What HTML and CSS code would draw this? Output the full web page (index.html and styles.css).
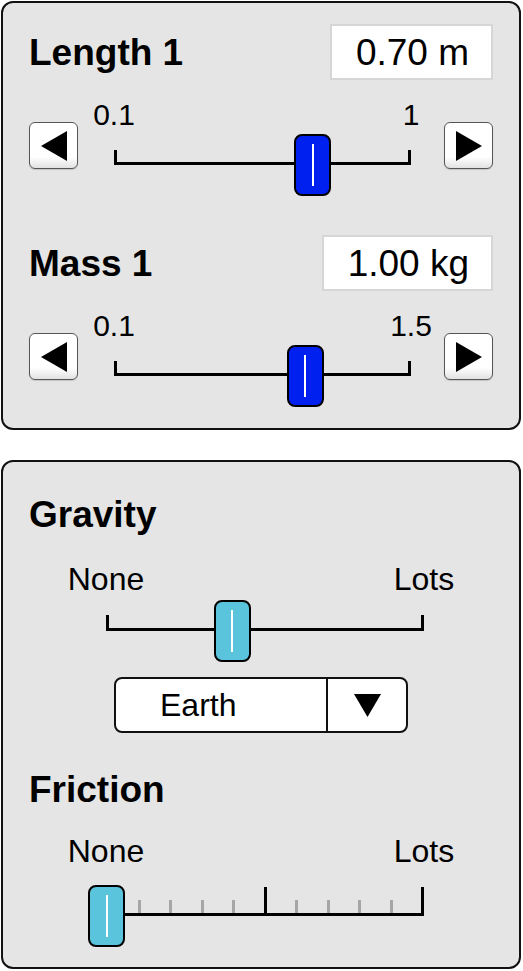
FILE: index.html
```html
<!DOCTYPE html>
<html>
<head>
<meta charset="utf-8">
<title>Pendulum controls</title>
<link rel="stylesheet" href="styles.css">
</head>
<body>
<div class="page">

	<!-- pendulum 1 settings -->
	<div class="panel panel-pendulum">
		<div class="control">
			<div class="control-head">
				<span class="title">Length 1</span>
				<span class="readout">0.70 m</span>
			</div>
			<div class="slider-row">
				<button class="arrow"><svg width="26" height="30" viewBox="0 0 26 30"><polygon points="26,0 26,30 0,15"/></svg></button>
				<div class="slider">
					<div class="ends"><span>0.1</span><span>1</span></div>
					<div class="rail">
						<div class="track"><i class="tick"></i><i class="tick"></i></div>
						<div class="thumb" style="left: 66.7%"></div>
					</div>
				</div>
				<button class="arrow"><svg width="26" height="30" viewBox="0 0 26 30"><polygon points="0,0 0,30 26,15"/></svg></button>
			</div>
		</div>

		<div class="control control-next">
			<div class="control-head">
				<span class="title">Mass 1</span>
				<span class="readout">1.00 kg</span>
			</div>
			<div class="slider-row">
				<button class="arrow"><svg width="26" height="30" viewBox="0 0 26 30"><polygon points="26,0 26,30 0,15"/></svg></button>
				<div class="slider">
					<div class="ends"><span>0.1</span><span>1.5</span></div>
					<div class="rail">
						<div class="track"><i class="tick"></i><i class="tick"></i></div>
						<div class="thumb" style="left: 64.3%"></div>
					</div>
				</div>
				<button class="arrow"><svg width="26" height="30" viewBox="0 0 26 30"><polygon points="0,0 0,30 26,15"/></svg></button>
			</div>
		</div>
	</div>

	<!-- world settings -->
	<div class="panel panel-world">
		<div class="title">Gravity</div>
		<div class="slider slider-wide">
			<div class="ends"><span>None</span><span>Lots</span></div>
			<div class="rail rail-gravity">
				<div class="track"><i class="tick"></i><i class="tick"></i></div>
				<div class="thumb thumb-light" style="left: 39.5%"></div>
			</div>
		</div>
		<div class="combo">
			<span class="combo-value">Earth</span>
			<span class="combo-button"><svg width="27" height="23" viewBox="0 0 27 23"><polygon points="0,0 27,0 13.5,23"/></svg></span>
		</div>

		<div class="title title-next">Friction</div>
		<div class="slider slider-wide slider-friction">
			<div class="ends"><span>None</span><span>Lots</span></div>
			<div class="rail rail-friction">
				<div class="track track-tall">
					<i class="tick"></i>
					<i class="tick minor"></i><i class="tick minor"></i><i class="tick minor"></i><i class="tick minor"></i>
					<i class="tick"></i>
					<i class="tick minor"></i><i class="tick minor"></i><i class="tick minor"></i><i class="tick minor"></i>
					<i class="tick"></i>
				</div>
				<div class="thumb thumb-light" style="left: 0%"></div>
			</div>
		</div>
	</div>

</div>
</body>
</html>
```

FILE: styles.css
```css
* {
	-webkit-box-sizing: border-box;
	box-sizing: border-box;
}

body {
	margin: 0;
	background: #fff;
	font-family: "Liberation Sans", Arial, Helvetica, sans-serif;
	color: #000;
}

.page {
	display: flex;
	flex-direction: column;
	gap: 30px;
	padding: 1px 2px 2px 1px;
	width: 523px;
}

.panel {
	width: 520px;
	background: #e5e5e5;
	border: 2px solid #111;
	border-radius: 12px;
}

.panel-pendulum {
	padding: 21px 26px 21px 26px;
}

.panel-world {
	padding: 32px 26px 20px 26px;
}

.title {
	font-size: 37px;
	font-weight: bold;
	line-height: 42px;
}

.title-next {
	margin-top: 36px;
}

/* header: name on the left, value box on the right */
.control-head {
	display: flex;
	justify-content: space-between;
	align-items: baseline;
}

.control-next {
	margin-top: 39px;
}

.readout {
	height: 56px;
	padding: 2px 22px 0 24px;
	background: #fff;
	border: 2px solid #d6d6d6;
	font-size: 37px;
	line-height: 50px;
}

.slider-row {
	display: flex;
	align-items: flex-start;
	margin-top: 20px;
}

.arrow {
	width: 49px;
	height: 47px;
	margin-top: 22px;
	padding: 0;
	display: flex;
	align-items: center;
	justify-content: center;
	background: linear-gradient(#fff 75%, #e2e2e2);
	border: 1px solid #555;
	border-radius: 6px;
	box-shadow: 0 1px 1px rgba(0,0,0,.15);
}

.arrow svg {
	fill: #000;
}

.slider {
	flex: 1;
	padding: 0 33px 0 36px;
}

.slider-wide {
	flex: none;
	width: 318px;
	padding: 0;
	margin: 27px 0 0 77px;
}

.slider-friction {
	margin-top: 24px;
}

/* min / max labels, each centred over its end of the track */
.ends {
	display: flex;
	justify-content: space-between;
	font-size: 30px;
	line-height: 30px;
}

.ends span {
	width: 0;
	display: flex;
	justify-content: center;
	white-space: nowrap;
}

.slider-wide .ends {
	font-size: 32px;
	line-height: 32px;
}

.rail {
	position: relative;
	height: 66px;
	padding-top: 20px;
}

.rail-gravity {
	height: 67px;
}

.rail-friction {
	height: 80px;
}

.track {
	display: flex;
	justify-content: space-between;
	align-items: flex-end;
	border-bottom: 3px solid #000;
}

.tick {
	display: block;
	width: 3px;
	height: 12px;
	background: #000;
}

.rail-gravity .tick {
	height: 13px;
}

.track-tall .tick {
	height: 26px;
}

.track-tall .tick.minor {
	width: 3px;
	height: 13px;
	background: #a6a6a6;
}

.thumb {
	position: absolute;
	top: 4px;
	width: 37px;
	height: 62px;
	margin-left: -18px;
	background: #0020f0;
	border: 2px solid #000;
	border-radius: 8px;
}

.thumb::after {
	content: "";
	position: absolute;
	left: 50%;
	top: 8px;
	bottom: 8px;
	width: 2px;
	margin-left: -1px;
	background: #fff;
}

.thumb-light {
	background: #5bc4dd;
}

.rail-gravity .thumb {
	top: 5px;
}

.rail-friction .thumb {
	top: 18px;
}

/* drop-down for the gravity preset */
.combo {
	display: flex;
	width: 294px;
	height: 56px;
	margin: 15px auto 0;
	background: #fff;
	border: 2px solid #111;
	border-radius: 8px;
}

.combo-value {
	flex: 1;
	display: flex;
	align-items: center;
	padding-left: 44px;
	font-size: 32px;
	line-height: 32px;
}

.combo-button {
	width: 80px;
	display: flex;
	align-items: center;
	justify-content: center;
	border-left: 2px solid #111;
}

.combo-button svg {
	fill: #000;
}
```
